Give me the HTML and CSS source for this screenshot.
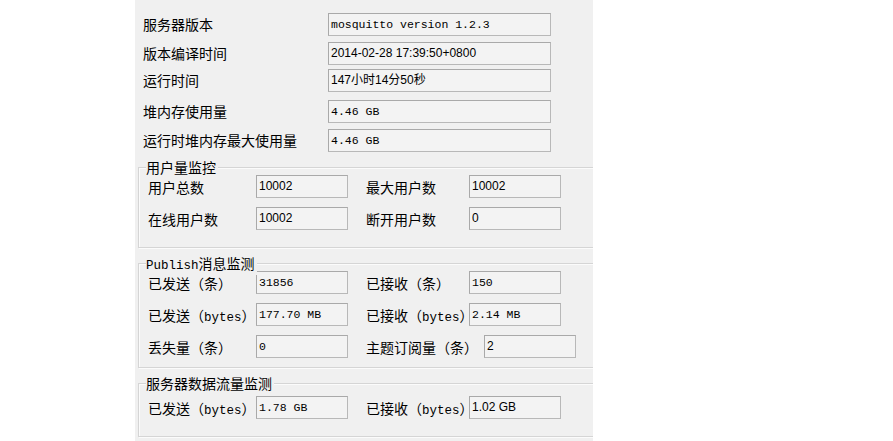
FILE: index.html
```html
<!DOCTYPE html>
<html>
<head>
<meta charset="utf-8">
<link rel="stylesheet" href="styles.css">
</head>
<body>
<div class="panel">
  <div class="top">
    <div class="trow"><span class="tlabel">服务器版本</span><div class="field wide mono">mosquitto version 1.2.3</div></div>
    <div class="trow"><span class="tlabel">版本编译时间</span><div class="field wide sans">2014-02-28 17:39:50+0800</div></div>
    <div class="trow tight"><span class="tlabel">运行时间</span><div class="field wide sans">147小时14分50秒</div></div>
    <div class="trow loose"><span class="tlabel">堆内存使用量</span><div class="field wide mono">4.46 GB</div></div>
    <div class="trow"><span class="tlabel">运行时堆内存最大使用量</span><div class="field wide mono">4.46 GB</div></div>
  </div>

  <div class="group g1">
    <span class="gtitle">用户量监控</span>
    <div class="grow">
      <span class="l1">用户总数</span><div class="field small sans">10002</div>
      <span class="l2">最大用户数</span><div class="field small sans">10002</div>
    </div>
    <div class="grow">
      <span class="l1">在线用户数</span><div class="field small sans">10002</div>
      <span class="l2">断开用户数</span><div class="field small sans">0</div>
    </div>
  </div>

  <div class="group g2">
    <span class="gtitle"><span class="latin">Publish</span>消息监测</span>
    <div class="grow">
      <span class="l1">已发送（条）</span><div class="field small mono">31856</div>
      <span class="l2">已接收（条）</span><div class="field small mono">150</div>
    </div>
    <div class="grow">
      <span class="l1">已发送（<span class="latin">bytes</span>）</span><div class="field small mono">177.70 MB</div>
      <span class="l2">已接收（<span class="latin">bytes</span>）</span><div class="field small mono">2.14 MB</div>
    </div>
    <div class="grow">
      <span class="l1">丢失量（条）</span><div class="field small mono">0</div>
      <span class="l2 long">主题订阅量（条）</span><div class="field small sans">2</div>
    </div>
  </div>

  <div class="group g3">
    <span class="gtitle">服务器数据流量监测</span>
    <div class="grow">
      <span class="l1">已发送（<span class="latin">bytes</span>）</span><div class="field small mono">1.78 GB</div>
      <span class="l2">已接收（<span class="latin">bytes</span>）</span><div class="field small sans">1.02 GB</div>
    </div>
  </div>
</div>
</body>
</html>
```

FILE: styles.css
```css
html, body {
  margin: 0;
  padding: 0;
  background: #ffffff;
}

.panel {
  margin-left: 135px;
  width: 458px;
  height: 441px;
  background: #f0f0f0;
  overflow: hidden;
  padding-top: 13px;
  box-sizing: border-box;
  font-family: "Noto Sans CJK SC", "Noto Sans", sans-serif;
  font-size: 14px;
  color: #000;
}

.top {
  display: flex;
  flex-direction: column;
  gap: 6px;
  padding-left: 8px;
}

.trow {
  display: flex;
  align-items: center;
  height: 23px;
}

.trow.tight { margin-top: -2px; }
.trow.loose { margin-top: 2px; }

.tlabel {
  width: 185px;
  line-height: 23px;
  white-space: nowrap;
}

.field {
  box-sizing: border-box;
  height: 23px;
  border: 1px solid #a9a9a9;
  border-bottom-color: #b8b8b8;
  border-right-color: #b8b8b8;
  background: #f3f3f3;
  padding-left: 2px;
  line-height: 21px;
  white-space: nowrap;
  overflow: hidden;
  color: #000;
}

.wide { width: 223px; }
.small { width: 92px; }

.mono {
  font-family: "Liberation Mono", "DejaVu Sans Mono", monospace;
  font-size: 11.5px;
}

.sans {
  font-family: "Liberation Sans", Arial, "Noto Sans CJK SC", sans-serif;
  font-size: 12px;
}

.latin {
  font-family: "Liberation Mono", monospace;
  font-size: 12.5px;
}

.group {
  position: relative;
  margin-left: 3px;
  width: 480px;
  border: 1px solid #d5d5d5;
  box-shadow: inset 1px 1px 0 #fbfbfb, 1px 1px 0 #fbfbfb;
  display: flex;
  flex-direction: column;
  padding-left: 9px;
}

.g1 {
  margin-top: 15px;
  padding-top: 7px;
  padding-bottom: 17px;
  gap: 9px;
}

.g2 {
  margin-top: 15px;
  padding-top: 7px;
  padding-bottom: 9px;
  gap: 9px;
}

.g3 {
  margin-top: 15px;
  padding-top: 12px;
  padding-bottom: 17px;
}

.gtitle {
  position: absolute;
  top: -10px;
  left: 7px;
  padding-right: 2px;
  background: #f0f0f0;
  line-height: 18px;
  white-space: nowrap;
}

.grow {
  display: flex;
  align-items: center;
  height: 23px;
}

.l1 {
  width: 108px;
  white-space: nowrap;
}

.l2 {
  margin-left: 18px;
  width: 103px;
  white-space: nowrap;
}

.l2.long {
  width: 118px;
}
```
